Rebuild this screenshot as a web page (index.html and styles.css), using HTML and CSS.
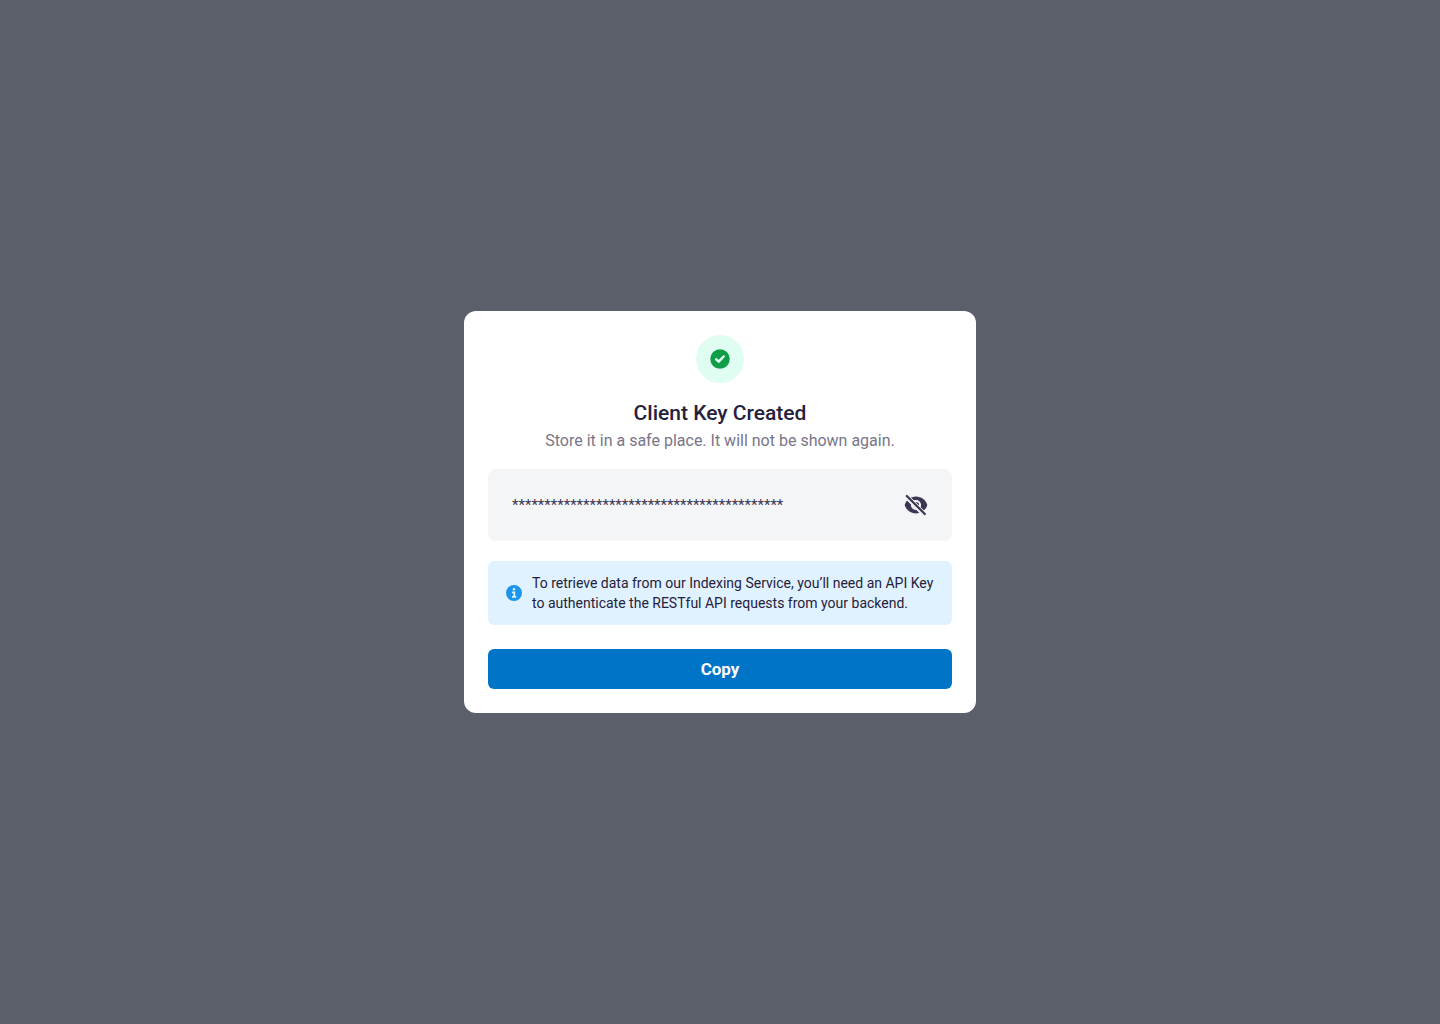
FILE: index.html
```html
<!DOCTYPE html>
<html lang="en">
<head>
    <meta charset="UTF-8">
    <meta name="viewport" content="width=device-width, initial-scale=1.0">
    <title>Client Key Created</title>
    <link rel="stylesheet" href="styles.css">
</head>
<body>
    <main class="modal">
        <!-- Header -->
        <div class="modal-header">
            <div class="success-badge">
                <svg width="24" height="24" viewBox="0 0 24 24" aria-hidden="true">
                    <circle cx="12" cy="12" r="9.75" fill="#0f9d47"/>
                    <path d="M8.2 12.4l2.5 2.3 5-5.2" fill="none" stroke="#e0fdf2" stroke-width="2.5" stroke-linecap="round" stroke-linejoin="round"/>
                </svg>
            </div>
            <h1>Client Key Created</h1>
            <p>Store it in a safe place. It will not be shown again.</p>
        </div>

        <!-- Key -->
        <div class="key-box">
            <input type="text" class="key-input" aria-label="Client key" value="******************************************" readonly>
            <button type="button" class="icon-button" aria-label="Show key">
                <svg width="24" height="24" viewBox="0 0 24 24" fill="none" aria-hidden="true">
                    <path d="M.7 12C2.2 7 6.600 3.500 12 3.500S21.800 7 23.300 12C21.800 17 17.400 20.500 12 20.500S2.200 17 .7 12z" fill="currentColor"/>
                    <circle cx="12" cy="12" r="4.1" stroke="#f4f5f7" stroke-width="2"/>
                    <path d="M1.500 2.500L21.500 22.500" stroke="#f4f5f7" stroke-width="5"/>
                    <path d="M2.800 3L20.800 21" stroke="currentColor" stroke-width="2.200" stroke-linecap="round"/>
                </svg>
            </button>
        </div>

        <!-- Info -->
        <div class="info-box">
            <svg width="20" height="20" viewBox="0 0 20 20" aria-hidden="true">
                <circle cx="10" cy="10" r="8" fill="#1c96ec"/>
                <circle cx="10" cy="6.2" r="1.2" fill="#e0f2ff"/>
                <path d="M8 9.300h2.300v4.200M8 13.800h4.200" fill="none" stroke="#e0f2ff" stroke-width="1.8"/>
            </svg>
            <p>To retrieve data from our Indexing Service, you’ll need an API Key to authenticate the RESTful API requests from your backend.</p>
        </div>

        <button type="button" class="copy-button">Copy</button>
    </main>
</body>
</html>
```
FILE: styles.css
```css
* {
    box-sizing: border-box;
}

body {
    margin: 0;
    min-height: 100vh;
    display: flex;
    justify-content: center;
    align-items: center;
    background: #5b5f69;
    color: #25213b;
    font-family: Roboto, sans-serif;
}

h1, p {
    margin: 0;
}

svg {
    display: block;
    flex-shrink: 0;
}

.modal {
    width: 100%;
    max-width: 512px;
    padding: 24px;
    background: #fff;
    border-radius: 12px;
}

/* Header */
.modal-header {
    display: flex;
    flex-direction: column;
    align-items: center;
    text-align: center;
}

.success-badge {
    display: flex;
    align-items: center;
    justify-content: center;
    width: 48px;
    height: 48px;
    margin-bottom: 16px;
    border-radius: 50%;
    background: #e0fdf2;
}

.modal-header h1 {
    margin-bottom: 2px;
    font-size: 21px;
    line-height: 28px;
    font-weight: 500;
}

.modal-header p {
    font-size: 16px;
    line-height: 24px;
    color: #787589;
}

/* Key */
.key-box {
    display: flex;
    align-items: center;
    gap: 16px;
    margin-top: 16px;
    padding: 24px;
    border-radius: 8px;
    background: #f4f5f7;
    color: #3b3654;
}

.key-input {
    flex: 1;
    min-width: 0;
    height: 24px;
    padding: 0;
    border: none;
    outline: none;
    background: none;
    color: inherit;
    font-family: inherit;
    font-size: 15px;
}

.icon-button {
    padding: 0;
    border: none;
    background: none;
    color: inherit;
    cursor: pointer;
}

/* Info */
.info-box {
    display: flex;
    align-items: center;
    gap: 8px;
    margin-top: 20px;
    padding: 12px 16px;
    border-radius: 6px;
    background: #e0f2ff;
}

.info-box p {
    font-size: 14px;
    line-height: 20px;
}

.copy-button {
    display: block;
    width: 100%;
    height: 40px;
    margin-top: 24px;
    border: none;
    border-radius: 6px;
    background: #0074c6;
    color: #fff;
    font-family: inherit;
    font-size: 17px;
    font-weight: 700;
    cursor: pointer;
}
```
